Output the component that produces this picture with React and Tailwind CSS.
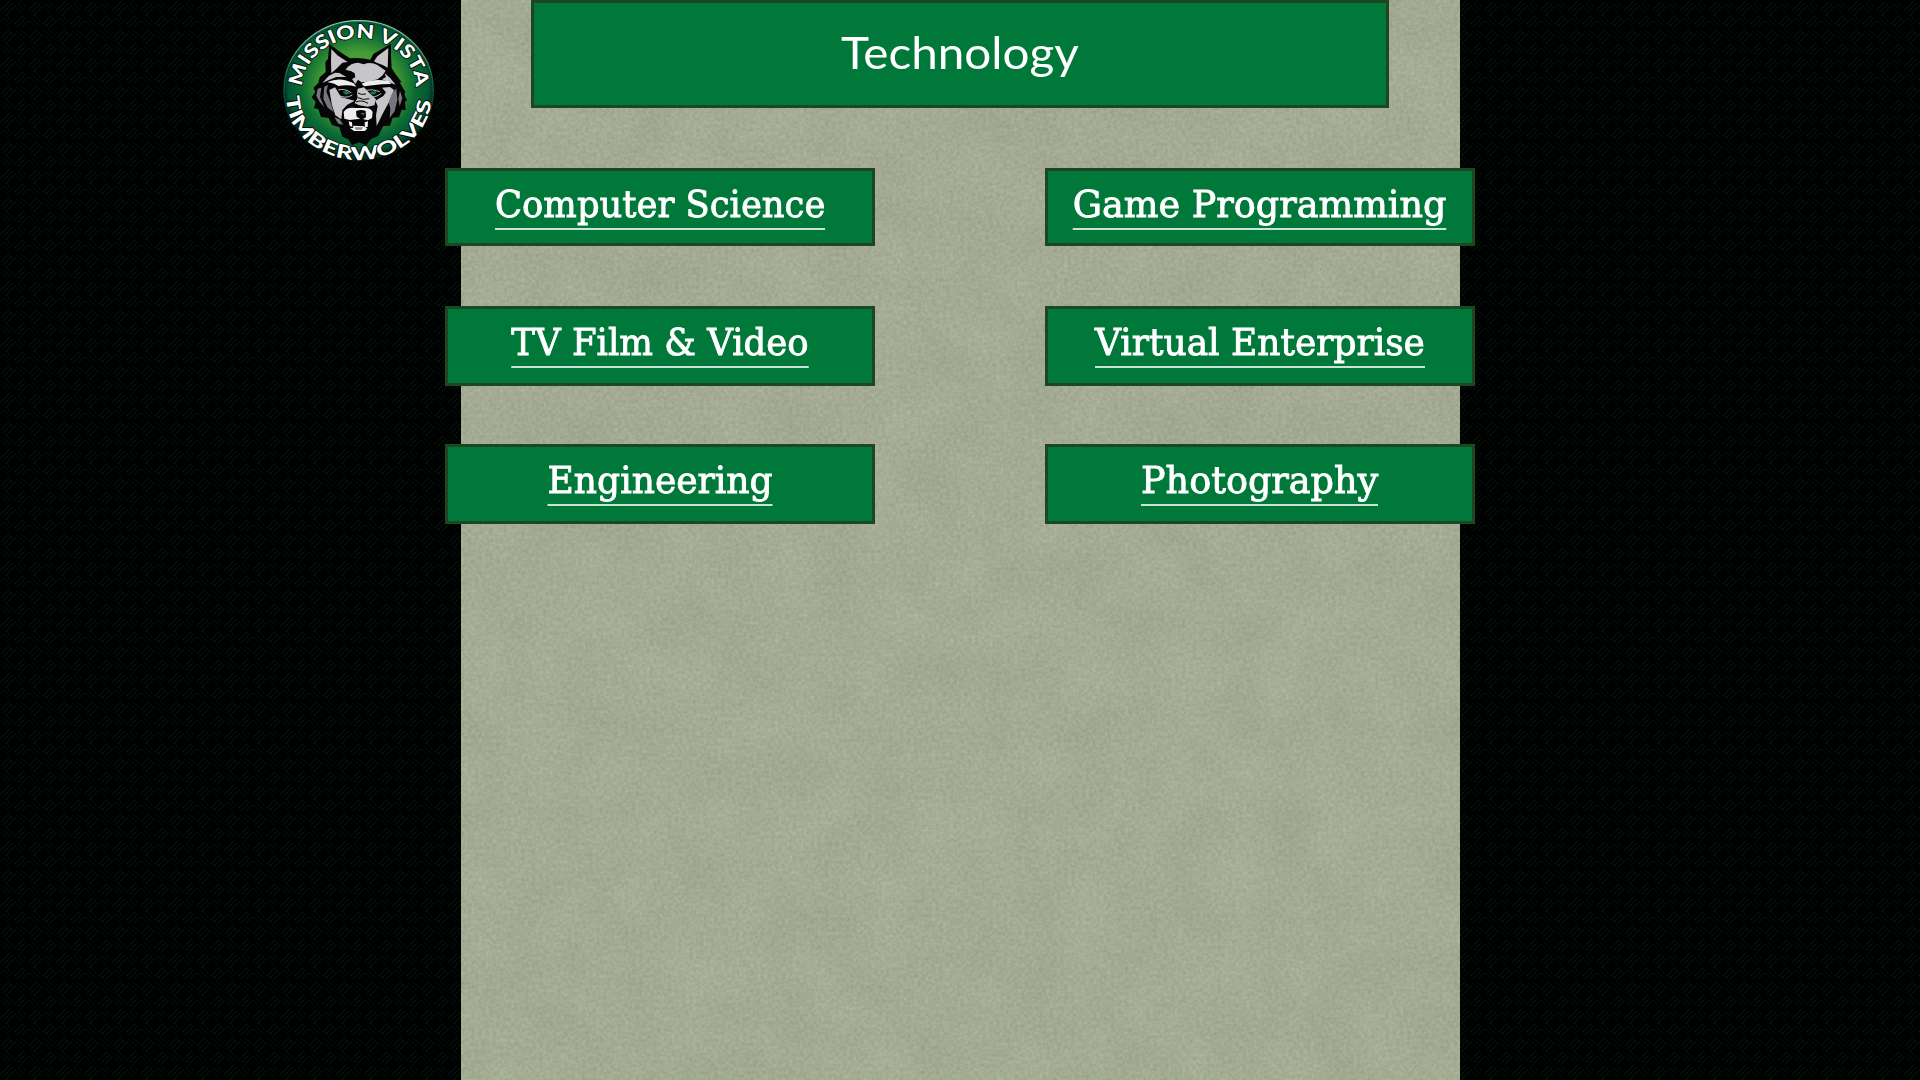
import { useLayoutEffect, useRef } from "react";

const ROWS = [
  [
    { label: "Computer Science", width: 330, height: "h-[78px]" },
    { label: "Game Programming", width: 373.5, height: "h-[78px]" },
  ],
  [
    { label: "TV Film & Video", width: 297.5, height: "h-[80px]" },
    { label: "Virtual Enterprise", width: 330, height: "h-[80px]" },
  ],
  [
    { label: "Engineering", width: 225, height: "h-[80px]" },
    { label: "Photography", width: 237, height: "h-[80px]" },
  ],
];

/* Condenses or widens a line of text so that it fills the given width. */
function FitText({ width, className, children }) {
  const ref = useRef(null);
  useLayoutEffect(() => {
    const el = ref.current;
    el.style.transform = `scaleX(${width / el.offsetWidth})`;
  }, [width]);
  return (
    <span ref={ref} className={`inline-block whitespace-nowrap ${className}`}>
      {children}
    </span>
  );
}

function Weave() {
  return (
    <svg className="absolute inset-0 h-full w-full" aria-hidden="true">
      <defs>
        <pattern id="weave" width="28" height="28" patternUnits="userSpaceOnUse">
          <rect width="28" height="28" fill="#000101" />
          <g stroke="#0c3012" strokeWidth="1" strokeDasharray="1.4 1.2" fill="none">
            <path d="M1 10 L10 1 M3.5 12.5 L12.5 3.5 M6 15 L15 6" />
            <path d="M15 24 L24 15 M17.5 26.5 L26.5 17.5 M20 29 L29 20" />
          </g>
          <g stroke="#091f0d" strokeWidth="1" strokeDasharray="1.4 1.2" fill="none">
            <path d="M15 6 L22 13 M17.5 3.5 L25 11 M20 1 L27 8" />
            <path d="M1 20 L8 27 M3.5 17.5 L11 25 M6 15 L13 22" />
          </g>
        </pattern>
      </defs>
      <rect width="100%" height="100%" fill="url(#weave)" />
    </svg>
  );
}

function PaperGrain() {
  return (
    <svg className="absolute inset-0 h-full w-full" aria-hidden="true">
      <filter id="grain" x="0" y="0" width="100%" height="100%" colorInterpolationFilters="sRGB">
        <feTurbulence type="fractalNoise" baseFrequency="0.28" numOctaves="3" seed="8" />
        <feColorMatrix values="0.16 0 0 0 0.566  0.16 0 0 0 0.592  0.16 0 0 0 0.498  0 0 0 0 1" />
      </filter>
      <filter id="mottle" x="0" y="0" width="100%" height="100%" colorInterpolationFilters="sRGB">
        <feTurbulence type="fractalNoise" baseFrequency="0.02" numOctaves="4" seed="3" />
        <feColorMatrix values="0.14 0 0 0 0.576  0.14 0 0 0 0.602  0.14 0 0 0 0.508  0 0 0 0 1" />
      </filter>
      <rect width="100%" height="100%" filter="url(#grain)" />
      <rect width="100%" height="100%" filter="url(#mottle)" opacity="0.3" />
    </svg>
  );
}

function Logo() {
  return (
    <svg viewBox="0 0 492 468" className="h-[156px] w-[164px]" role="img" aria-label="Mission Vista Timberwolves">
      <defs>
        <radialGradient id="disc" cx="0.5" cy="0.47" r="0.5">
          <stop offset="0" stopColor="#6ab33c" />
          <stop offset="0.5" stopColor="#429b35" />
          <stop offset="0.76" stopColor="#0b6b33" />
          <stop offset="0.94" stopColor="#035534" />
          <stop offset="1" stopColor="#02301e" />
        </radialGradient>
        <linearGradient id="rim" x1="0" y1="0" x2="0" y2="1">
          <stop offset="0" stopColor="#8ed0b4" />
          <stop offset="0.4" stopColor="#136a4a" />
          <stop offset="0.8" stopColor="#02180e" />
        </linearGradient>
        <path id="arcTop" d="M80 224 A168 146 0 1 1 418 226" />
        <path id="arcBottom" d="M31 254 A217 190 0 0 0 466 252" />
      </defs>
      <ellipse cx="248" cy="235" rx="224" ry="209" fill="url(#disc)" stroke="url(#rim)" strokeWidth="4" />

      <path
        fill="#050505"
        d="M160 96 L198 124 L222 139 Q250 135 283 143 L292 126 L345 95 Q344 130 347 168 L359 187 L377 211 L371 211 L388 240 L385 247 L393 265 L387 269 L389 294 L377 293 L369 316 L350 317 L342 341 L322 342 L307 371 L285 381 L270 400 L249 391 L228 400 L217 382 L199 374 L190 346 L168 339 L158 318 L135 315 L127 292 L114 288 L119 270 L107 256 L118 239 L112 228 L127 212 L131 196 L149 180 L148 150 L156 140 Z"
      />
      <g fill="#c6c6ca">
        <path d="M166 111 L184 130 L215 150 L199 152 L181 170 L166 184 Q164 145 166 111 Z" />
        <path d="M337 108 L335 167 L320 159 L302 152 L294 148 L304 133 Z" />
        <path d="M209 173 Q222 152 247 152 L263 157 Q284 149 303 158 L329 176 L320 190 L305 202 L275 209 L256 211 L246 203 L238 216 L228 201 L238 196 L236 184 L226 178 Z" />
        <path d="M177 182 L190 183 L211 195 L181 195 L157 205 L139 213 L158 192 Z" />
        <path d="M326 183 L343 199 L359 218 L337 210 L318 202 L330 195 Z" />
        <path d="M160 234 L177 226 L186 240 L196 256 L236 266 L214 278 L199 294 L196 322 L178 310 L168 280 Z" />
        <path d="M318 227 L342 225 L354 234 L339 270 L320 305 L302 342 L300 310 L305 283 L298 266 L322 252 L330 241 Z" />
        <path d="M245 230 L264 226 L278 241 L300 262 L295 280 L275 284 L250 280 L236 274 L245 257 L243 244 Z" />
      </g>
      <g fill="#ededee">
        <path d="M154 210 Q193 193 233 214 L241 224 Q215 217 187 222 L175 215 Z" />
        <path d="M257 215 Q290 199 336 207 L346 216 L317 217 L264 223 Z" />
        <path d="M203 300 Q212 284 238 288 L262 288 Q284 286 290 300 L288 318 L276 325 L257 320 L240 322 L221 324 L205 320 Z" />
      </g>
      <g fill="#77757f">
        <path d="M145 224 L156 219 L151 239 L162 266 L173 300 L155 287 L142 260 Z" />
        <path d="M125 230 L136 227 L132 255 L145 285 L131 270 L121 251 Z" />
        <path d="M175 316 L190 321 L202 338 L187 335 Z" />
        <path d="M347 247 L361 229 L364 265 L356 297 L341 318 L343 290 L338 271 Z" />
        <path d="M372 236 L379 258 L371 283 L367 260 Z" />
      </g>
      <g fill="none" stroke="#b9b9bf" strokeWidth="3">
        <path d="M187 234 Q207 228 226 243 M184 247 Q207 263 229 249 M268 235 Q290 230 311 239 M273 252 Q297 260 316 244" />
      </g>
      <g fill="none" stroke="#050505" strokeWidth="3">
        <path d="M246 243 Q256 250 270 246 M246 257 Q262 266 280 260 M240 270 Q256 262 276 274" />
      </g>
      <path fill="#0b7a40" d="M199 240 L213 236 L222 244 L210 249 Z M281 240 L298 237 L302 244 L288 249 Z" />
      <path fill="#050505" d="M240 298 Q254 290 269 297 L270 316 L257 323 L242 314 Z" />
      <path fill="#55555a" d="M252 303 L265 302 L264 311 Z" />
      <path fill="#f4f4f4" d="M218 328 L228 331 L229 344 L221 342 Z M266 331 L276 328 L275 345 L267 346 Z M232 341 L264 343 L274 350 L266 357 L234 357 L222 348 L231 348 Z" />
      <path fill="#88888e" d="M236 346 L260 346 L257 353 L239 353 Z" />

      <g
        fill="#fff"
        stroke="#04150d"
        strokeWidth="5"
        strokeLinejoin="round"
        paintOrder="stroke"
        className="font-['Lato',sans-serif] font-black"
      >
        <text fontSize="57">
          <textPath href="#arcTop" textLength="496" lengthAdjust="spacingAndGlyphs">MISSION VISTA</textPath>
        </text>
        <text fontSize="56">
          <textPath href="#arcBottom" textLength="626" lengthAdjust="spacingAndGlyphs">TIMBERWOLVES</textPath>
        </text>
      </g>
    </svg>
  );
}

function CourseButton({ label, width, height }) {
  return (
    <a
      href="#"
      className={`flex w-[430px] justify-center border-[3px] border-[#1c4721] bg-[#00783a] pt-[7px] text-white ${height}`}
    >
      <FitText
        width={width}
        className="h-[52px] border-b-2 border-white/80 font-['DejaVu_Serif',serif] text-[37.5px] leading-[52px] [-webkit-text-stroke:0.9px_white]"
      >
        {label}
      </FitText>
    </a>
  );
}

export default function App() {
  return (
    <div className="relative flex h-[1080px] w-[1920px] justify-center overflow-hidden bg-black">
      <Weave />
      <div className="absolute left-[276px] top-[12px]">
        <Logo />
      </div>
      <main className="relative flex w-[999px] flex-col items-center bg-[#a5ab93]">
        <PaperGrain />
        <h1 className="relative flex h-[108px] w-[858px] shrink-0 justify-center border-[3px] border-[#1c4721] bg-[#00783a] text-white">
          <FitText width={238} className="font-['Lato',sans-serif] text-[44px] leading-[98px]">
            Technology
          </FitText>
        </h1>
        <nav className="relative mt-[60px] grid w-[1030px] shrink-0 auto-rows-[138px] grid-cols-[430px_430px] items-start justify-between">
          {ROWS.flat().map((item) => (
            <CourseButton key={item.label} {...item} />
          ))}
        </nav>
      </main>
    </div>
  );
}
